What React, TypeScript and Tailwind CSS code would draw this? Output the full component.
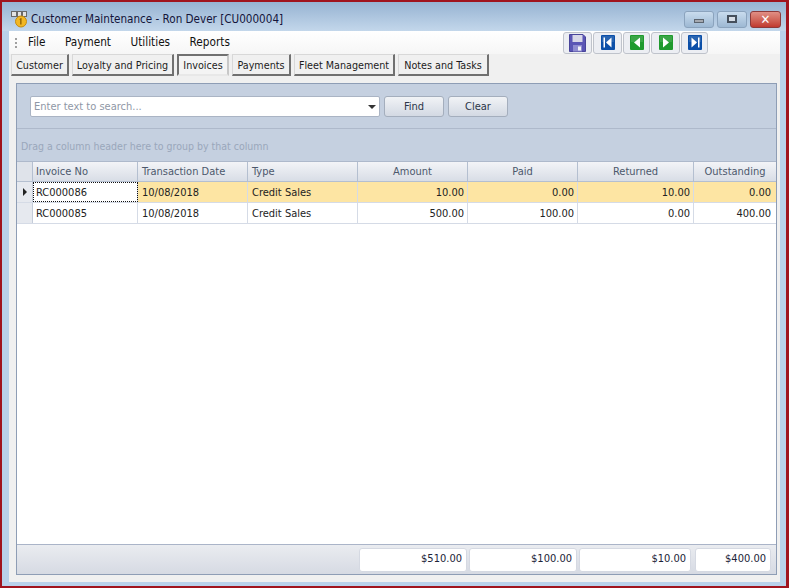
import React from 'react';

const columns = [
  { title: 'Invoice No', right: false, center: false },
  { title: 'Transaction Date', right: false, center: false },
  { title: 'Type', right: false, center: false },
  { title: 'Amount', right: true, center: true },
  { title: 'Paid', right: true, center: true },
  { title: 'Returned', right: true, center: true },
  { title: 'Outstanding', right: true, center: true },
];

const rows = [
  ['RC000086', '10/08/2018', 'Credit Sales', '10.00', '0.00', '10.00', '0.00'],
  ['RC000085', '10/08/2018', 'Credit Sales', '500.00', '100.00', '0.00', '400.00'],
];

const tabs = [
  { label: 'Customer', width: 'w-[58px]' },
  { label: 'Loyalty and Pricing', width: 'w-[102px]' },
  { label: 'Invoices', width: 'w-[52px]', active: true },
  { label: 'Payments', width: 'w-[59px]' },
  { label: 'Fleet Management', width: 'w-[101px]' },
  { label: 'Notes and Tasks', width: 'w-[91px]' },
];

const SaveIcon = () => (
  <svg width="17" height="18" viewBox="0 0 17 18">
    <path d="M0.5 0.5H14L16.5 3V17.5H0.5Z" fill="#5a55b5" stroke="#48449a" />
    <rect x="3.5" y="1" width="10" height="7" fill="#d8d8e8" />
    <rect x="4" y="11" width="9" height="6.5" fill="#8f8cd0" />
    <rect x="9" y="12.5" width="3" height="4" fill="#f4f4fa" />
  </svg>
);

const NavIcon = ({ color, dir, bar }: { color: string; dir: 'left' | 'right'; bar?: boolean }) => (
  <svg width="14" height="15" viewBox="0 0 14 15">
    <rect width="14" height="15" rx="1" fill={color} />
    <rect x="1" y="1" width="12" height="6" fill="#ffffff" opacity="0.12" />
    {dir === 'left' ? (
      <path d={bar ? 'M10.5 2.5V12.5L5 7.5Z' : 'M10 2.5V12.5L4 7.5Z'} fill="#ffffff" />
    ) : (
      <path d={bar ? 'M3.5 2.5V12.5L9 7.5Z' : 'M4 2.5V12.5L10 7.5Z'} fill="#ffffff" />
    )}
    {bar && <rect x={dir === 'left' ? 2.5 : 10} y="2.5" width="1.5" height="10" fill="#ffffff" />}
  </svg>
);

const AppIcon = () => (
  <svg width="17" height="17" viewBox="0 0 17 17">
    <rect x="0.5" y="0.5" width="5" height="5" fill="#e4e4e4" stroke="#6a6a6a" />
    <rect x="6.5" y="0.5" width="4" height="5" fill="#e4e4e4" stroke="#6a6a6a" />
    <rect x="11.5" y="0.5" width="4" height="5" fill="#e4e4e4" stroke="#6a6a6a" />
    <circle cx="10" cy="10.5" r="5.5" fill="#f2b722" stroke="#c48c12" />
    <path d="M9 7.5L10.5 7V13.5H9.2V8.6L8.4 8.9Z" fill="#8a5c00" />
  </svg>
);

const WinButton = ({ className, children }: { className: string; children: React.ReactNode }) => (
  <div className={`h-[17px] rounded-[3px] border flex items-center justify-center ${className}`}>{children}</div>
);

const ToolButton = ({ width, children }: { width: string; children: React.ReactNode }) => (
  <button className={`${width} h-[22px] rounded-[3px] border border-[#bfc3cb] bg-[#eceef3] flex items-center justify-center`}>
    {children}
  </button>
);

const App = () => (
  <div
    className="w-[789px] h-[588px] overflow-hidden flex flex-col border-t-2 border-l-2 border-r-[3px] border-b-2 border-[#a0141e] bg-[#b9d1ea] text-[11px] text-[#222]"
    style={{ fontFamily: '"DejaVu Sans Condensed", "Liberation Sans", sans-serif' }}
  >
    <div className="h-[29px] shrink-0 flex items-center pt-[5px] pl-[9px] pr-[5px] bg-gradient-to-b from-[#97b3d2] to-[#c3d7eb]">
      <AppIcon />
      <span className="ml-[3px] mt-[1px] text-[11.6px] text-[#14143a]">Customer Maintenance - Ron Dever [CU000004]</span>
      <div className="ml-auto flex gap-[3px]">
        <WinButton className="w-[30px] border-[#8ba3bd] bg-gradient-to-b from-[#c9dcee] to-[#9db8d3]">
          <div className="w-[10px] h-[4px] mt-[3px] bg-[#a5a9b0] border border-[#5c6570]" />
        </WinButton>
        <WinButton className="w-[30px] border-[#8ba3bd] bg-gradient-to-b from-[#c9dcee] to-[#9db8d3]">
          <div className="w-[10px] h-[8px] border-2 border-[#454f5c] bg-[#d6dde6]" />
        </WinButton>
        <WinButton className="w-[31px] border-[#8d3a3a] bg-gradient-to-b from-[#e08f85] to-[#c0392f]">
          <span className="text-white font-bold text-[13px] leading-none">✕</span>
        </WinButton>
      </div>
    </div>

    <div className="flex-1 min-h-0 ml-[7px] mr-[6px] mb-[4px] bg-[#f0f0f0] flex flex-col">
      <div className="h-[23px] shrink-0 flex items-center bg-gradient-to-b from-[#ffffff] to-[#f6f6f6] pl-[6px] text-[11.7px]">
        <div className="flex flex-col gap-[2px] mr-[11px]">
          <span className="w-[2px] h-[2px] bg-[#a0a0a0]" />
          <span className="w-[2px] h-[2px] bg-[#a0a0a0]" />
          <span className="w-[2px] h-[2px] bg-[#a0a0a0]" />
        </div>
        <nav className="flex gap-[19.5px] text-[#111]">
          <span>File</span>
          <span>Payment</span>
          <span>Utilities</span>
          <span>Reports</span>
        </nav>
        <div className="ml-auto mr-[72px] flex gap-px">
          <ToolButton width="w-[29px]"><SaveIcon /></ToolButton>
          <ToolButton width="w-[29px]"><NavIcon color="#0b4fa8" dir="left" bar /></ToolButton>
          <ToolButton width="w-[27px]"><NavIcon color="#1f9a2e" dir="left" /></ToolButton>
          <ToolButton width="w-[29px]"><NavIcon color="#1f9a2e" dir="right" /></ToolButton>
          <ToolButton width="w-[27px]"><NavIcon color="#0b4fa8" dir="right" bar /></ToolButton>
        </div>
      </div>

      <div className="h-[22px] shrink-0 flex gap-[3px] pl-[2px] text-[10.7px] text-[#1c1c1c]">
        {tabs.map((tab) => (
          <div
            key={tab.label}
            className={`${tab.width} h-[22px] pt-[3px] flex items-center justify-center whitespace-nowrap ${
              tab.active
                ? 'border-2 border-t-[#707070] border-l-[#707070] border-r-[#c8c8c8] border-b-[#e8e8e8] bg-[#f4f4f4]'
                : 'border border-[#d8d8d8] border-r-2 border-b-2 border-r-[#707070] border-b-[#707070] bg-[#f0f0f0]'
            }`}
          >
            {tab.label}
          </div>
        ))}
      </div>

      <div className="flex-1 min-h-0 mt-[7px] ml-[7px] mr-[3px] mb-[7px] border border-[#8e9db5] flex flex-col bg-white">
        <div className="h-[45px] shrink-0 flex items-center gap-[4px] pl-[13px] bg-[#c5d0e0] border-b border-[#aeb9cb]">
          <div className="w-[350px] h-[21px] pt-[2px] flex items-center justify-between pl-[3px] pr-[1px] bg-white border border-[#aab4c4] rounded-[2px]">
            <span className="text-[#8f97a6]">Enter text to search...</span>
            <span className="w-0 h-0 mr-[2px] border-x-[4px] border-x-transparent border-t-[4px] border-t-[#333]" />
          </div>
          <button className="w-[60px] h-[21px] pt-[2px] rounded-[3px] border border-[#a4aebd] bg-gradient-to-b from-[#f1f3f6] to-[#d3d9e3] text-[#2b3648]">Find</button>
          <button className="w-[60px] h-[21px] pt-[2px] rounded-[3px] border border-[#a4aebd] bg-gradient-to-b from-[#f1f3f6] to-[#d3d9e3] text-[#2b3648]">Clear</button>
        </div>
        <div className="h-[33px] shrink-0 pt-[3px] flex items-center pl-[4px] bg-[#c5d0e0] text-[10.5px] text-[#9aa7bb] border-b border-[#aeb9cb]">
          Drag a column header here to group by that column
        </div>

        <div className="h-[20px] shrink-0 grid grid-cols-[16px_105px_110px_110px_110px_110px_116px_82px] bg-gradient-to-b from-[#f3f4f7] to-[#d8dde6] border-b border-[#b4bfd0] text-[#4c586c]">
          <div className="border-r border-[#b4bfd0] bg-[#dfe3ea]" />
          {columns.map((col, j) => (
            <div
              key={col.title}
              className={`pt-[2px] flex items-center border-r border-[#b4bfd0] last:border-r-0 ${
                col.center ? 'justify-center' : j === 0 ? 'pl-[3px]' : 'pl-[4px]'
              }`}
            >
              {col.title}
            </div>
          ))}
        </div>

        {rows.map((row, i) => (
          <div
            key={row[0]}
            className={`h-[21px] shrink-0 grid grid-cols-[16px_105px_110px_110px_110px_110px_116px_82px] border-b border-[#d5dbe6] ${
              i === 0 ? 'bg-[#fde5a3]' : 'bg-white'
            }`}
          >
            <div className="flex items-center justify-center bg-[#e6e9ef] border-r border-[#c4ccd9]">
              {i === 0 && <span className="w-0 h-0 border-y-[4px] border-y-transparent border-l-[4px] border-l-[#222]" />}
            </div>
            {row.map((cell, j) => (
              <div
                key={j}
                className={`pt-[2px] flex items-center border-r border-[#d5dbe6] last:border-r-0 ${
                  columns[j].right ? (j === 6 ? 'justify-end pr-[5px]' : 'justify-end pr-[3px]') : j === 0 ? 'pl-[3px]' : 'pl-[4px]'
                } ${i === 0 && j === 0 ? 'bg-white outline-1 outline-dotted outline-offset-[-1px] outline-[#111]' : ''}`}
              >
                {cell}
              </div>
            ))}
          </div>
        ))}

        <div className="flex-1" />

        <div className="h-[30px] shrink-0 flex items-center pl-[342px] border-t border-[#aab4c8] bg-gradient-to-b from-[#eaecf0] to-[#d6dae3] text-[#1c2438]">
          <div className="w-[108px] h-[24px] mr-[2px] flex items-center justify-end pr-[4px] bg-white rounded-[3px] border border-[#d5d9e2]">$510.00</div>
          <div className="w-[108px] h-[24px] mr-[2px] flex items-center justify-end pr-[4px] bg-white rounded-[3px] border border-[#d5d9e2]">$100.00</div>
          <div className="w-[112px] h-[24px] mr-[4px] flex items-center justify-end pr-[4px] bg-white rounded-[3px] border border-[#d5d9e2]">$10.00</div>
          <div className="w-[76px] h-[24px] flex items-center justify-end pr-[4px] bg-white rounded-[3px] border border-[#d5d9e2]">$400.00</div>
        </div>
      </div>
    </div>
  </div>
);

export default App;
